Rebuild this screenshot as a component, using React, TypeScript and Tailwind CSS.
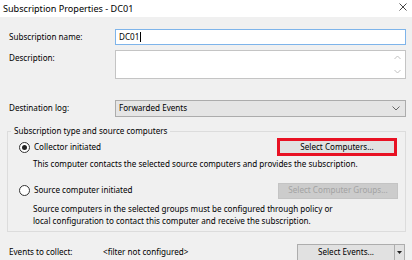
import React from "react";

function Radio({ checked }: { checked?: boolean }) {
  return (
    <span className="w-[11px] h-[11px] rounded-full border border-[#333] bg-white flex items-center justify-center shrink-0">
      {checked && <span className="w-[5px] h-[5px] rounded-full bg-[#222]" />}
    </span>
  );
}

export default function App() {
  return (
    <div
      className="w-[412px] h-[260px] bg-[#f0f0f0] overflow-hidden text-[8.1px] text-black leading-none"
      style={{ fontFamily: '"Noto Sans", "Open Sans", sans-serif' }}
    >
      <div className="h-[17px] bg-white flex items-center justify-between pl-[3px] pr-[5px] text-[9.1px]">
        <span>Subscription Properties - DC01</span>
        <svg width="8" height="8" viewBox="0 0 8 8" className="text-[#333] -mt-[3px]">
          <path d="M0.5 0.5 L7.5 7.5 M7.5 0.5 L0.5 7.5" stroke="currentColor" strokeWidth="0.9" />
        </svg>
      </div>
      <div className="pl-[9px] pr-[6px] pt-[12px]">
        <div className="flex items-center h-[16px]">
          <span className="w-[106px]">Subscription name:</span>
          <div className="flex-1 h-[16px] border border-[#7eb4ea] bg-white flex items-center pl-[3px]">
            DC01<span className="w-px h-[10px] bg-black ml-[1px]" />
          </div>
        </div>
        <div className="flex mt-[5px] h-[29px]">
          <span className="w-[106px] pt-[4px]">Description:</span>
          <div className="flex-1 border border-[#c4c4c4] bg-white flex justify-end">
            <div className="w-[16px] flex flex-col items-center justify-between py-[4px] text-[#c0c0c0]">
              <svg width="7" height="5" viewBox="0 0 7 5"><path d="M0.5 4 L3.5 1 L6.5 4" stroke="currentColor" fill="none" /></svg>
              <svg width="7" height="5" viewBox="0 0 7 5"><path d="M0.5 1 L3.5 4 L6.5 1" stroke="currentColor" fill="none" /></svg>
            </div>
          </div>
        </div>
        <div className="flex items-center mt-[21px] h-[17px]">
          <span className="w-[106px]">Destination log:</span>
          <div className="flex-1 h-[17px] border border-[#acacac] bg-[#e5e5e5] flex items-center justify-between pl-[3px] pr-[5px]">
            <span>Forwarded Events</span>
            <svg width="8" height="5" viewBox="0 0 8 5" className="text-[#666]"><path d="M0.5 0.5 L4 4 L7.5 0.5" stroke="currentColor" fill="none" /></svg>
          </div>
        </div>
        <fieldset className="mt-[8px] ml-[-2px] border border-[#dcdcdc] p-0 h-[107px]">
          <legend className="ml-[3px] px-[3px] h-[12px] flex items-center">Subscription type and source computers</legend>
          <div className="pl-[11px] pr-[8px]">
            <div className="flex items-center justify-between mt-[1px] h-[18px]">
              <div className="flex items-center gap-[4px]">
                <Radio checked />
                <span>Collector initiated</span>
              </div>
              <div className="border-[3px] border-[#e81123]">
                <div className="w-[114px] h-[12px] bg-[#e1e1e1] flex items-center justify-center">Select Computers...</div>
              </div>
            </div>
            <div className="pl-[14px] mt-[2px] h-[12px] flex items-center">
              This computer contacts the selected source computers and provides the subscription.
            </div>
            <div className="flex items-center justify-between mt-[12px] h-[17px]">
              <div className="flex items-center gap-[4px]">
                <Radio />
                <span>Source computer initiated</span>
              </div>
              <div className="w-[120px] h-[16px] mr-[-1px] bg-[#cccccc] border border-[#c4c4c4] text-[#a3a3a3] flex items-center justify-center">
                Select Computer Groups...
              </div>
            </div>
            <div className="pl-[14px] mt-[4px] leading-[12px]">
              Source computers in the selected groups must be configured through policy or
              <br />
              local configuration to contact this computer and receive the subscription.
            </div>
          </div>
        </fieldset>
        <div className="flex items-center mt-[12px] h-[17px]">
          <span className="w-[94px]">Events to collect:</span>
          <span>&lt;filter not configured&gt;</span>
          <div className="ml-auto mr-[1px] h-[17px] w-[108px] border border-[#adadad] bg-[#e1e1e1] flex">
            <div className="flex-1 flex items-center justify-center">Select Events...</div>
            <div className="w-[10px] border-l border-[#adadad] flex items-center justify-center">
              <svg width="5" height="3" viewBox="0 0 5 3"><path d="M0 0 L5 0 L2.5 3 Z" fill="#222" /></svg>
            </div>
          </div>
        </div>
      </div>
    </div>
  );
}
